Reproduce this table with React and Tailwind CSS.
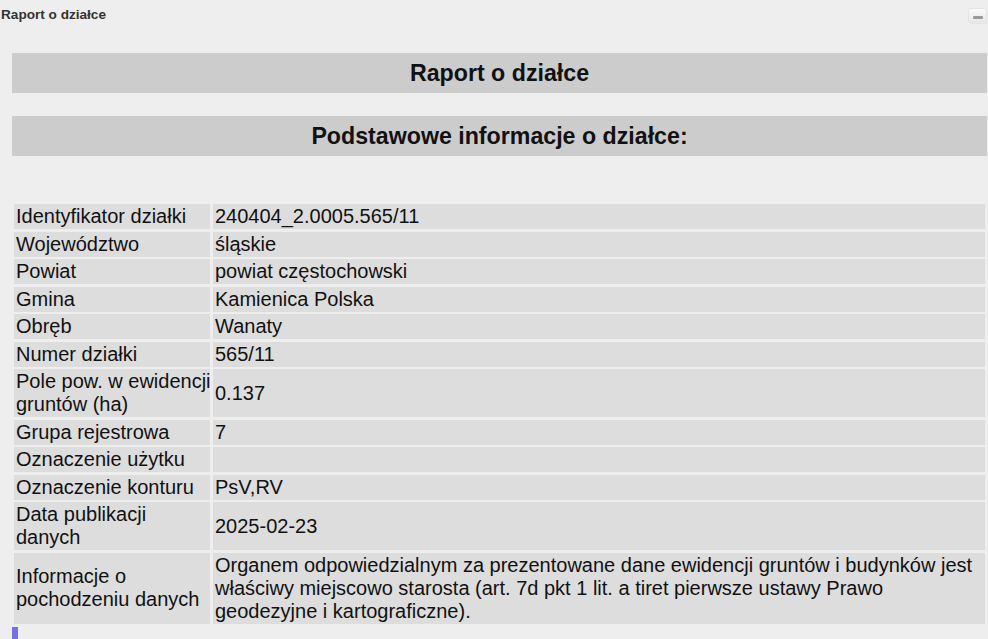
export default function App() {
  const rows = [
    [["Identyfikator działki"], "240404_2.0005.565/11"],
    [["Województwo"], "śląskie"],
    [["Powiat"], "powiat częstochowski"],
    [["Gmina"], "Kamienica Polska"],
    [["Obręb"], "Wanaty"],
    [["Numer działki"], "565/11"],
    [["Pole pow. w ewidencji", "gruntów (ha)"], "0.137"],
    [["Grupa rejestrowa"], "7"],
    [["Oznaczenie użytku"], ""],
    [["Oznaczenie konturu"], "PsV,RV"],
    [["Data publikacji", "danych"], "2025-02-23"],
    [
      ["Informacje o", "pochodzeniu danych"],
      "Organem odpowiedzialnym za prezentowane dane ewidencji gruntów i budynków jest właściwy miejscowo starosta (art. 7d pkt 1 lit. a tiret pierwsze ustawy Prawo geodezyjne i kartograficzne).",
    ],
  ];
  return (
    <div
      className="w-[988px] h-[639px] overflow-hidden bg-[#eeeeee] relative"
      style={{ fontFamily: '"Liberation Sans", Arial, sans-serif' }}
    >
      <div className="flex items-center justify-between h-[30px] pl-[1px] pr-[1px]">
        <span className="text-[13.6px] font-bold text-[#333333]">Raport o działce</span>
        <div className="w-[19px] h-[16px] mt-[1px] rounded-[3px] border border-[#e4e4e4] bg-gradient-to-b from-[#fafafa] to-[#e6e6e6] flex items-center justify-center">
          <div className="w-[10px] h-[3px] bg-[#9a9a9a] rounded-[1px] mt-[3px]" />
        </div>
      </div>
      <div className="pl-[12px] pr-[1px] pt-[23px]">
        <div className="h-[40px] bg-[#cccccc] flex items-center justify-center">
          <h1 className="text-[23.2px] font-bold text-[#111111]">Raport o działce</h1>
        </div>
        <div className="h-[40px] bg-[#cccccc] flex items-center justify-center mt-[23px]">
          <h2 className="text-[23.2px] font-bold text-[#111111]">Podstawowe informacje o działce:</h2>
        </div>
        <div className="mt-[46px] p-[2px] grid grid-cols-[196px_1fr] gap-x-[3px] gap-y-[2.5px] text-[20px] leading-[23px] text-[#111111]">
          {rows.map(([k, v], i) => (
            <div key={i} className="contents">
              <div className="bg-[#dddddd] px-[2px] py-[1px] flex flex-col justify-center whitespace-nowrap">
                {k.map((line, j) => (
                  <span key={j}>{line}</span>
                ))}
              </div>
              <div className="bg-[#dddddd] px-[2px] py-[1px] flex items-center">{v}</div>
            </div>
          ))}
        </div>
        <div className="w-[6px] h-[20px] bg-[#7373df] mt-[1px]" />
      </div>
    </div>
  );
}
